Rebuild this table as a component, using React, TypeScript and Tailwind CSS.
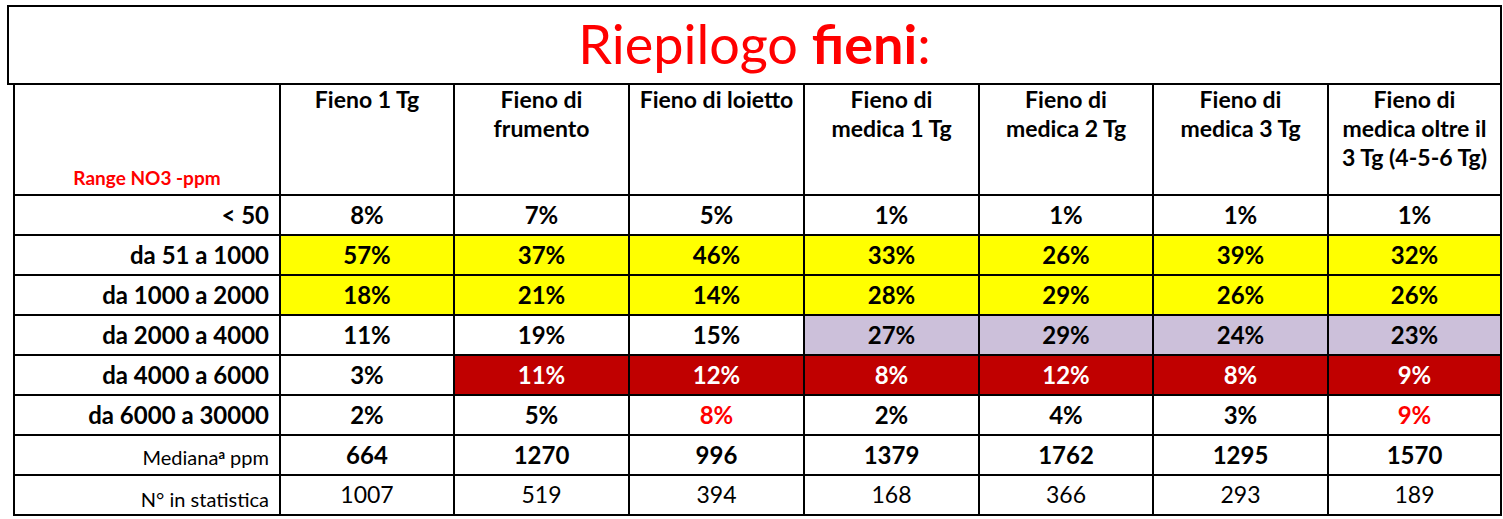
const cols = [
  ["Fieno 1 Tg"],
  ["Fieno di", "frumento"],
  ["Fieno di loietto"],
  ["Fieno di", "medica 1 Tg"],
  ["Fieno di", "medica 2 Tg"],
  ["Fieno di", "medica 3 Tg"],
  ["Fieno di", "medica oltre il", "3 Tg (4-5-6 Tg)"],
];

type Tone = "w" | "y" | "l" | "r" | "t";

const rows: { label: string; values: string[]; tones: Tone[] }[] = [
  { label: "< 50", values: ["8%", "7%", "5%", "1%", "1%", "1%", "1%"], tones: ["w", "w", "w", "w", "w", "w", "w"] },
  { label: "da 51 a 1000", values: ["57%", "37%", "46%", "33%", "26%", "39%", "32%"], tones: ["y", "y", "y", "y", "y", "y", "y"] },
  { label: "da 1000 a 2000", values: ["18%", "21%", "14%", "28%", "29%", "26%", "26%"], tones: ["y", "y", "y", "y", "y", "y", "y"] },
  { label: "da 2000 a 4000", values: ["11%", "19%", "15%", "27%", "29%", "24%", "23%"], tones: ["w", "w", "w", "l", "l", "l", "l"] },
  { label: "da 4000 a 6000", values: ["3%", "11%", "12%", "8%", "12%", "8%", "9%"], tones: ["w", "r", "r", "r", "r", "r", "r"] },
  { label: "da 6000 a 30000", values: ["2%", "5%", "8%", "2%", "4%", "3%", "9%"], tones: ["w", "w", "t", "w", "w", "w", "t"] },
];

const toneClass: Record<Tone, string> = {
  w: "bg-white text-black",
  y: "bg-[#ffff00] text-black",
  l: "bg-[#ccc0da] text-black",
  r: "bg-[#c00000] text-white",
  t: "bg-white text-[#ff0000]",
};

const mediana = ["664", "1270", "996", "1379", "1762", "1295", "1570"];
const counts = ["1007", "519", "394", "168", "366", "293", "189"];

export default function App() {
  return (
    <div className="min-h-[519px] bg-white pl-[7px] pt-[5px] font-['Lato','Noto_Sans',sans-serif] text-black">
      <div className="flex h-[80px] w-[1495px] items-center justify-center border-2 border-black pb-[2px] text-[54px] leading-none text-[#ff0000]">
        <span>
          Riepilogo <span className="font-bold">fieni</span>:
        </span>
      </div>

      <table className="-mt-[2px] ml-[6px] w-[1487px] table-fixed border-collapse">
        <colgroup>
          <col className="w-[266px]" />
          <col className="w-[174px]" />
          <col className="w-[175px]" />
          <col className="w-[175px]" />
          <col className="w-[175px]" />
          <col className="w-[174px]" />
          <col className="w-[175px]" />
          <col className="w-[173px]" />
        </colgroup>
        <thead>
          <tr className="h-[111px]">
            <th className="border-2 border-black pb-[4px] align-bottom text-[19px] font-bold leading-tight text-[#ff0000]">
              Range NO3 -ppm
            </th>
            {cols.map((c) => (
              <th key={c.join(" ")} className="border-2 border-black px-1 pt-0 align-top text-[23px] font-bold leading-[29px]">
                {c.map((line) => (
                  <div key={line} className="whitespace-nowrap">
                    {line}
                  </div>
                ))}
              </th>
            ))}
          </tr>
        </thead>
        <tbody>
          {rows.map((r) => (
            <tr key={r.label} className="h-[40px]">
              <td className="border-2 border-black pr-[10px] text-right text-[24px] font-bold">{r.label}</td>
              {r.values.map((v, i) => (
                <td key={i} className={`border-2 border-black text-center text-[24px] font-bold ${toneClass[r.tones[i]]}`}>
                  {v}
                </td>
              ))}
            </tr>
          ))}
          <tr className="h-[40px]">
            <td className="border-2 border-black pr-[10px] pt-[4px] text-right text-[20px]">
              Mediana<sup className="text-[13px] font-bold">a</sup> ppm
            </td>
            {mediana.map((v, i) => (
              <td key={i} className="border-2 border-black text-center text-[24px] font-bold">
                {v}
              </td>
            ))}
          </tr>
          <tr className="h-[40px]">
            <td className="border-2 border-black pr-[10px] pt-[8px] text-right text-[20px] leading-tight">N° in statistica</td>
            {counts.map((v, i) => (
              <td key={i} className="border-2 border-black pb-[2px] text-center text-[23px]">
                {v}
              </td>
            ))}
          </tr>
        </tbody>
      </table>
    </div>
  );
}
